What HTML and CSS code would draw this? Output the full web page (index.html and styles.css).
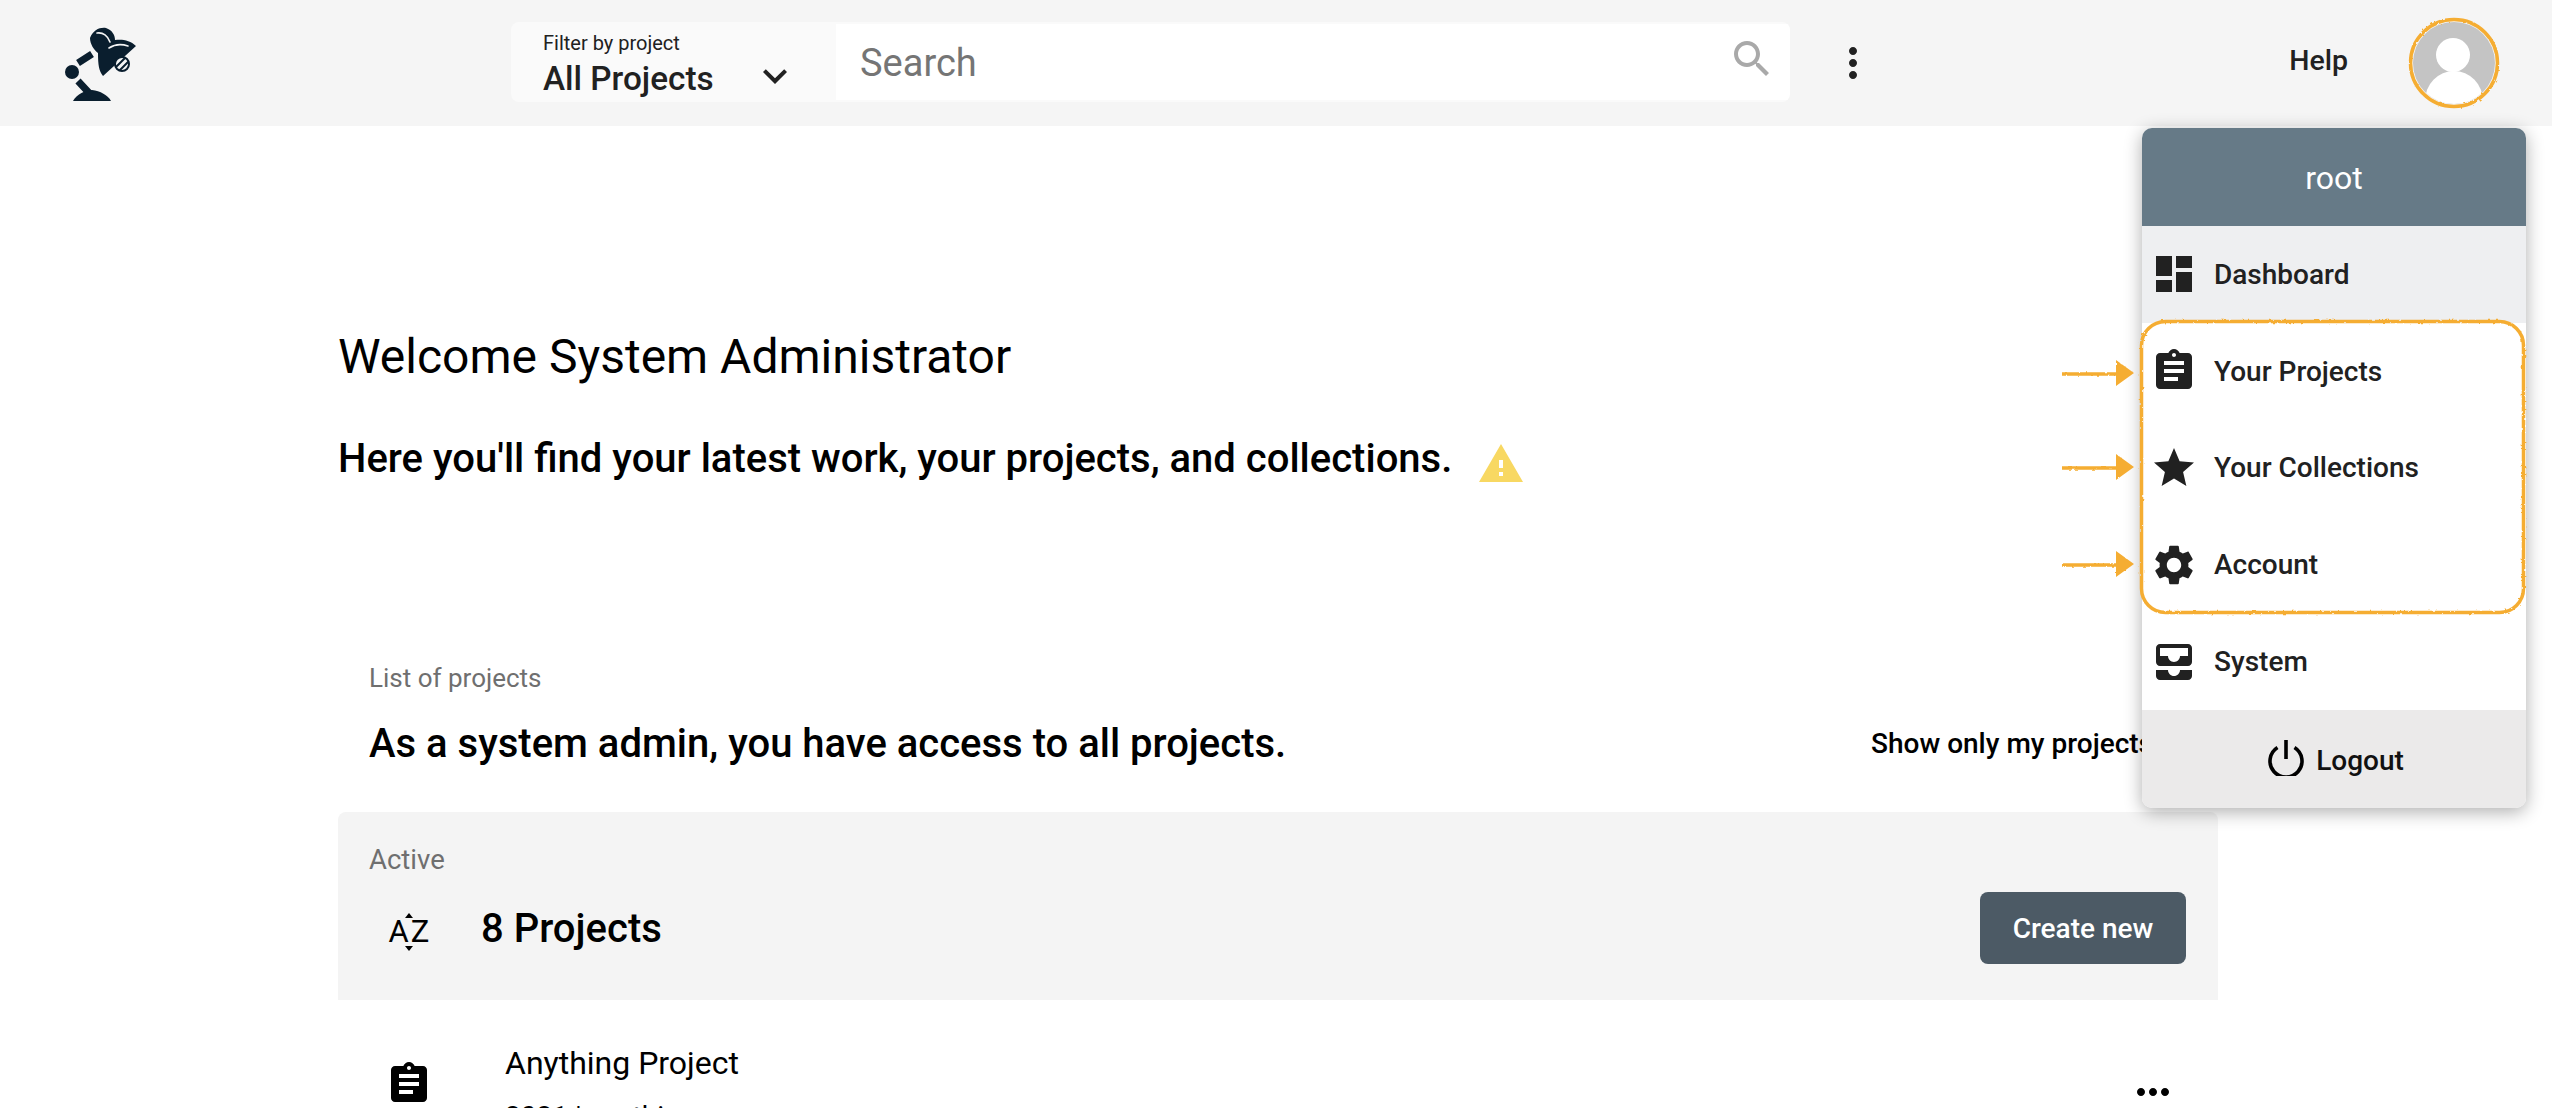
FILE: index.html
```html
<!DOCTYPE html>
<html lang="en">
<head>
<meta charset="utf-8">
<title>Projects</title>
<link rel="stylesheet" href="styles.css">
</head>
<body>
<svg class="defs" width="0" height="0" aria-hidden="true">
  <defs>
    <filter id="rough" x="-5%" y="-5%" width="110%" height="110%">
      <feTurbulence type="fractalNoise" baseFrequency="0.25" numOctaves="2" seed="4"/>
      <feDisplacementMap in="SourceGraphic" scale="2.5"/>
    </filter>
    <path id="i-assign" d="M19 3h-4.18C14.4 1.84 13.3 1 12 1c-1.3 0-2.4.84-2.82 2H5c-1.1 0-2 .9-2 2v14c0 1.1.9 2 2 2h14c1.1 0 2-.9 2-2V5c0-1.1-.9-2-2-2zm-7 0c.55 0 1 .45 1 1s-.45 1-1 1-1-.45-1-1 .45-1 1-1zm2 14H7v-2h7v2zm3-4H7v-2h10v2zm0-4H7V7h10v2z"/>
  </defs>
</svg>

<header class="topbar">
  <svg class="logo" viewBox="0 0 120 100">
    <path class="logo-fill" d="M33 88C37 81 44 78 52 77 60 78 68 82 71 88Z"/>
    <path class="logo-line" d="M38 68 51 82M38 50 52 41"/>
    <circle class="logo-fill" cx="32" cy="59" r="7"/>
    <path class="logo-fill" d="M50 25C53 17 60 14 66 15 72 17 75 22 75 27 82 26 90 27 96 33L63 63C59 58 58 52 58 40 54 37 50 31 50 25Z"/>
    <path class="logo-glow" d="M57 20C63 19 68 23 70 29M69 35C75 31 82 31 88 33"/>
    <circle class="logo-bulb" cx="82" cy="51" r="7"/>
    <path class="logo-glow thin" d="M76 54 85 45M80 57 88 49"/>
  </svg>

  <div class="searchbox">
    <div class="filter">
      <div class="filter-label">Filter by project</div>
      <div class="filter-value">All Projects</div>
      <svg class="icon chevron" viewBox="0 0 24 24"><path d="M16.59 8.59L12 13.17 7.41 8.59 6 10l6 6 6-6z"/></svg>
    </div>
    <div class="search">
      <span class="search-text">Search</span>
      <svg class="icon search-icon" viewBox="0 0 24 24"><path d="M15.5 14h-.79l-.28-.27C15.41 12.59 16 11.11 16 9.5 16 5.91 13.09 3 9.5 3S3 5.91 3 9.5 5.91 16 9.5 16c1.61 0 3.09-.59 4.23-1.57l.27.28v.79l5 4.99L20.49 19l-4.99-5zm-6 0C7.01 14 5 11.99 5 9.5S7.01 5 9.5 5 14 7.01 14 9.5 11.99 14 9.5 14z"/></svg>
    </div>
  </div>
  <svg class="icon kebab" viewBox="0 0 24 24"><path d="M12 8c1.1 0 2-.9 2-2s-.9-2-2-2-2 .9-2 2 .9 2 2 2zm0 2c-1.1 0-2 .9-2 2s.9 2 2 2 2-.9 2-2-.9-2-2-2zm0 6c-1.1 0-2 .9-2 2s.9 2 2 2 2-.9 2-2-.9-2-2-2z"/></svg>

  <a class="help">Help</a>
  <div class="avatar">
    <svg viewBox="0 0 92 92">
      <defs><clipPath id="avatar-clip"><circle cx="46" cy="46" r="41"/></clipPath></defs>
      <circle cx="46" cy="46" r="41" fill="#c4c4c4"/>
      <g clip-path="url(#avatar-clip)" fill="#fff">
        <circle cx="45" cy="38" r="17"/>
        <ellipse cx="46" cy="84" rx="29" ry="30"/>
      </g>
      <circle class="ring" cx="46" cy="46" r="43.5" filter="url(#rough)"/>
    </svg>
  </div>
</header>

<main class="page">
  <h1 class="welcome">Welcome System Administrator</h1>
  <div class="intro">
    <span>Here you'll find your latest work, your projects, and collections.</span>
    <svg class="icon warn" viewBox="0 0 24 24"><path d="M1 21h22L12 2 1 21zm12-3h-2v-2h2v2zm0-4h-2v-4h2v4z"/></svg>
  </div>

  <section class="list-head">
    <div class="eyebrow">List of projects</div>
    <div class="list-title-row">
      <h2 class="list-title">As a system admin, you have access to all projects.</h2>
      <span class="only-mine">Show only my projects</span>
    </div>
  </section>

  <section class="bar">
    <div class="eyebrow eyebrow-large">Active</div>
    <div class="bar-row">
      <div class="sort">
        <span class="tri tri-up"></span>
        <span class="sort-text">AZ</span>
        <span class="tri tri-down"></span>
      </div>
      <div class="count">8 Projects</div>
      <button class="create">Create new</button>
    </div>
  </section>

  <article class="project">
    <svg class="icon project-icon" viewBox="0 0 24 24"><use href="#i-assign"/></svg>
    <div class="project-body">
      <div class="project-name">Anything Project</div>
      <div class="project-sub">2021 | anything</div>
    </div>
    <svg class="icon project-more" viewBox="0 0 24 24"><path d="M6 10c-1.1 0-2 .9-2 2s.9 2 2 2 2-.9 2-2-.9-2-2-2zm12 0c-1.1 0-2 .9-2 2s.9 2 2 2 2-.9 2-2-.9-2-2-2zm-6 0c-1.1 0-2 .9-2 2s.9 2 2 2 2-.9 2-2-.9-2-2-2z"/></svg>
  </article>
</main>

<nav class="menu">
  <div class="menu-head">root</div>
  <a class="menu-item active"><svg class="icon" viewBox="0 0 24 24"><path d="M3 13h8V3H3v10zm0 8h8v-6H3v6zm10 0h8V11h-8v10zm0-18v6h8V3h-8z"/></svg>Dashboard</a>
  <a class="menu-item"><svg class="icon" viewBox="0 0 24 24"><use href="#i-assign"/></svg>Your Projects</a>
  <a class="menu-item"><svg class="icon" viewBox="0 0 24 24"><path d="M12 17.27L18.18 21l-1.64-7.03L22 9.24l-7.19-.61L12 2 9.19 8.63 2 9.24l5.46 4.73L5.82 21z"/></svg>Your Collections</a>
  <a class="menu-item"><svg class="icon" viewBox="0 0 24 24"><path d="M19.14 12.94c.04-.3.06-.61.06-.94 0-.32-.02-.64-.07-.94l2.03-1.58c.18-.14.23-.41.12-.61l-1.92-3.32c-.12-.22-.37-.29-.59-.22l-2.39.96c-.5-.38-1.03-.7-1.62-.94l-.36-2.54c-.04-.24-.24-.41-.48-.41h-3.84c-.24 0-.43.17-.47.41l-.36 2.54c-.59.24-1.13.57-1.62.94l-2.39-.96c-.22-.08-.47 0-.59.22L2.74 8.87c-.12.21-.08.47.12.61l2.03 1.58c-.05.3-.09.63-.09.94s.02.64.07.94l-2.03 1.58c-.18.14-.23.41-.12.61l1.92 3.32c.12.22.37.29.59.22l2.39-.96c.5.38 1.03.7 1.62.94l.36 2.54c.05.24.24.41.48.41h3.84c.24 0 .44-.17.47-.41l.36-2.54c.59-.24 1.13-.56 1.62-.94l2.39.96c.22.08.47 0 .59-.22l1.92-3.32c.12-.22.07-.47-.12-.61l-2.01-1.58zM12 15.6c-1.98 0-3.6-1.62-3.6-3.6s1.62-3.6 3.6-3.6 3.6 1.62 3.6 3.6-1.62 3.6-3.6 3.6z"/></svg>Account</a>
  <a class="menu-item"><svg class="icon" viewBox="0 0 24 24"><path d="M19 3H5c-1.1 0-2 .9-2 2v7c0 1.1.9 2 2 2h14c1.1 0 2-.9 2-2V5c0-1.1-.9-2-2-2zm0 6h-4c0 1.62-1.38 3-3 3s-3-1.38-3-3H5V5h14v4zm-4 7h6v3c0 1.1-.9 2-2 2H5c-1.1 0-2-.9-2-2v-3h6c0 1.66 1.34 3 3 3s3-1.34 3-3z"/></svg>System</a>
  <a class="menu-foot">
    <svg class="power" viewBox="0 0 36 36"><path d="M9.5 7.5a16 16 0 1 0 17 0M18 0v19"/></svg>
    Logout
  </a>
</nav>

<svg class="annotation" viewBox="0 0 480 300">
  <g filter="url(#rough)">
    <rect class="note-box" x="81.5" y="3.5" width="382" height="291" rx="24"/>
    <path class="note-line" d="M2 56H60M2 150H60M2 247H60"/>
    <path class="note-head" d="M56 42 74 55 56 68ZM56 136 74 149 56 162ZM56 233 74 246 56 259Z"/>
  </g>
</svg>
</body>
</html>
```
FILE: styles.css
```css
* { box-sizing: border-box; }
html, body { margin: 0; height: 100%; }
body {
  position: relative;
  overflow: hidden;
  background: #fff;
  color: #000;
  font-family: Roboto, "Noto Sans", sans-serif;
}
.defs { position: absolute; }
.icon { display: block; width: 48px; height: 48px; flex: none; fill: #212121; }

.topbar {
  display: flex;
  align-items: center;
  height: 126px;
  padding-left: 40px;
  background: #f5f5f5;
}
.logo { display: block; width: 120px; height: 100px; flex: none; margin-right: 351px; }
.logo-fill { fill: #0a1e2e; }
.logo-line { fill: none; stroke: #0a1e2e; stroke-width: 7; }
.logo-glow { fill: none; stroke: #f5f5f5; stroke-width: 1.6; stroke-linecap: round; }
.logo-glow.thin { stroke: #0a1e2e; stroke-width: 2; }
.logo-bulb { fill: #f5f5f5; stroke: #0a1e2e; stroke-width: 2; }

.searchbox {
  display: flex;
  width: 1279px;
  height: 80px;
  margin-top: -2px;
  background: #fafafa;
  border-radius: 8px;
  overflow: hidden;
  flex: none;
}
.filter { position: relative; width: 325px; padding: 8px 0 0 32px; flex: none; }
.filter-label { font-size: 20px; line-height: 26px; color: #212121; }
.filter-value { margin-top: 4px; font-size: 33.3px; line-height: 38px; font-weight: 500; color: #212121; }
.chevron { position: absolute; left: 240px; top: 30px; }
.search {
  display: flex;
  flex: 1;
  align-items: center;
  justify-content: space-between;
  height: 76px;
  margin-top: 2px;
  padding: 0 14px 0 24px;
  background: #fff;
}
.search-text { font-size: 38px; margin-top: 2px; color: #757575; }
.search-icon { fill: #a9a9a9; margin-top: -7px; }
.kebab { margin-left: 39px; margin-top: -1px; }
.help { margin-left: auto; margin-top: -6px; font-size: 28.5px; font-weight: 500; color: #212121; }
.avatar { width: 92px; height: 92px; margin: 0 52px 0 60px; flex: none; }
.avatar svg { display: block; width: 92px; height: 92px; }
.ring { fill: none; stroke: #f5ad33; stroke-width: 3.5; }

.page { width: 1880px; margin-left: 338px; padding-top: 201px; }
.welcome { margin: 0; font-size: 48px; line-height: 60px; font-weight: 400; }
.intro { display: flex; align-items: center; margin-top: 43px; font-size: 40px; line-height: 50px; font-weight: 500; }
.warn { fill: #f8d862; margin-left: 25px; margin-top: 10px; }
.list-head { margin-top: 172px; padding-left: 31px; }
.eyebrow { font-size: 26px; line-height: 36px; color: #6f6f6f; }
.eyebrow-large { font-size: 27.5px; }
.list-title-row { display: flex; align-items: center; justify-content: space-between; margin-top: 23px; }
.list-title { margin: 0; font-size: 40px; line-height: 50px; font-weight: 500; }
.only-mine { width: 347px; font-size: 28px; line-height: 50px; font-weight: 500; white-space: nowrap; }

.bar {
  height: 188px;
  margin-top: 43px;
  padding: 30px 32px 0 31px;
  background: #f4f4f4;
  border-radius: 8px 8px 0 0;
}
.bar-row { display: flex; align-items: center; margin-top: 14px; }
.sort { display: flex; flex-direction: column; align-items: center; width: 46px; margin: 8px 0 0 17px; }
.sort-text { font-size: 31px; line-height: 28px; letter-spacing: 2px; margin-right: -2px; }
.tri { width: 0; height: 0; border-left: 4px solid transparent; border-right: 4px solid transparent; }
.tri-up { border-bottom: 5px solid #000; }
.tri-down { border-top: 5px solid #000; }
.count { margin-left: 49px; font-size: 40px; font-weight: 500; }
.create {
  width: 206px;
  height: 72px;
  margin-left: auto;
  border: 0;
  border-radius: 8px;
  background: #4c5a65;
  color: #fff;
  font: 500 28px Roboto, sans-serif;
}

.project { display: flex; align-items: flex-start; padding: 43px 41px 0 47px; }
.project-icon { margin-top: 17px; fill: #000; }
.project-body { flex: 1; margin-left: 72px; }
.project-name { font-size: 32px; line-height: 40px; }
.project-sub { margin-top: 17px; font-size: 28px; line-height: 34px; }
.project-more { margin-top: 25px; fill: #000; }

.menu {
  position: absolute;
  left: 2142px;
  top: 128px;
  width: 384px;
  height: 680px;
  display: flex;
  flex-direction: column;
  background: #fff;
  border-radius: 10px;
  box-shadow: 0 4px 18px rgba(0, 0, 0, .32);
  overflow: hidden;
}
.menu-head {
  height: 98px;
  background: #667a87;
  color: #fff;
  font-size: 32px;
  line-height: 100px;
  text-align: center;
  flex: none;
}
.menu-item {
  display: flex;
  align-items: center;
  gap: 16px;
  height: 96.8px;
  padding-left: 8px;
  font-size: 28px;
  font-weight: 500;
  color: #212121;
  flex: none;
}
.menu-item.active { background: #eeeff1; }
.menu-foot {
  display: flex;
  align-items: center;
  justify-content: center;
  gap: 12px;
  flex: 1;
  padding: 3px 0 0 4px;
  background: #ebeaea;
  font-size: 28px;
  font-weight: 500;
  color: #111;
}
.power { display: block; width: 36px; height: 36px; fill: none; stroke: #000; stroke-width: 3.6; margin-top: -4px; }

.annotation {
  position: absolute;
  left: 2060px;
  top: 318px;
  width: 480px;
  height: 300px;
  pointer-events: none;
}
.note-box, .note-line { fill: none; stroke: #f5ad33; stroke-width: 3.5; }
.note-head { fill: #f5ad33; stroke: none; }
```
